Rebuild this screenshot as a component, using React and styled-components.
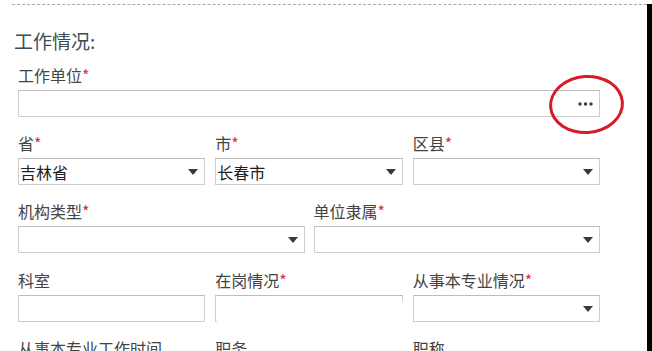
import React from 'react';
import styled, { createGlobalStyle } from 'styled-components';

const GlobalStyle = createGlobalStyle`
  html, body {
    margin: 0;
    padding: 0;
    background: #fff;
  }
  body {
    font-family: "Noto Sans CJK SC", "Liberation Sans", sans-serif;
    color: #333;
  }
`;

const Page = styled.div`
  display: flex;
  width: 652px;
  height: 351px;
  overflow: hidden;
  background: #fff;
`;

const Main = styled.div`
  flex: 1;
  padding-top: 4px;
`;

const EdgeBar = styled.div`
  width: 5px;
  margin-top: 4px;
  background: #000;
`;

const Section = styled.section`
  margin-left: 12px;
  border-top: 1px dashed #a8a8a8;
`;

const Heading = styled.h3`
  margin: 24px 0 0 2px;
  height: 24px;
  font-size: 19px;
  line-height: 24px;
  font-weight: 400;
  color: #3d4c57;
`;

const Form = styled.div`
  width: 582px;
  margin: 12px 0 0 6px;
  display: flex;
  flex-direction: column;
  gap: 16px;
`;

const Row = styled.div`
  display: grid;
  grid-template-columns: repeat(${p => p.$cols}, 1fr);
  column-gap: ${p => (p.$cols === 2 ? 9 : 10)}px;
  margin-top: ${p => p.$extra || 0}px;
`;

const Field = styled.div`
  position: relative;
  display: flex;
  flex-direction: column;
  gap: 5px;
  z-index: ${p => p.$raise ? 2 : 'auto'};
`;

const Label = styled.label`
  display: block;
  height: 20px;
  overflow: visible;
  font-size: 16px;
  line-height: 20px;
  color: #444;
  white-space: nowrap;
`;

const Star = styled.span`
  color: #dd2b3c;
`;

const Box = styled.div`
  position: relative;
  height: 27px;
  box-sizing: border-box;
  border: 1px solid #cdcdcd;
  border-top-color: #bdbdbd;
  background: #fff;
  display: flex;
  align-items: center;
  justify-content: space-between;
  padding: 0 6px 0 1px;
  font-size: 16px;
  color: #222;
`;

const Value = styled.span`
  line-height: 20px;
`;

const DotsButton = styled.span`
  display: flex;
  align-items: center;
`;

const Circle = styled.div`
  position: absolute;
  left: 530px;
  top: -16px;
  width: 75px;
  height: 59px;
  box-sizing: border-box;
  border: 3px solid #d71b29;
  border-radius: 50%;
  transform: rotate(-4deg);
  pointer-events: none;
`;

const BlankMenu = styled.div`
  position: absolute;
  left: 1px;
  top: 5px;
  width: 247px;
  height: 34px;
  background: #fff;
  z-index: 1;
`;

const Caret = () => (
  <svg width="10" height="6" viewBox="0 0 10 6">
    <path d="M0 0 L10 0 L5 6 Z" fill="#3a3a3a" />
  </svg>
);

const Dots = () => (
  <svg width="15" height="4" viewBox="0 0 15 4">
    <circle cx="2" cy="2" r="1.7" fill="#3c3c3c" />
    <circle cx="7.5" cy="2" r="1.7" fill="#3c3c3c" />
    <circle cx="13" cy="2" r="1.7" fill="#3c3c3c" />
  </svg>
);

const Select = ({ value }) => (
  <Box>
    <Value>{value}</Value>
    <Caret />
  </Box>
);

const LabelText = ({ text, required }) => (
  <Label>
    {text}
    {required && <Star>*</Star>}
  </Label>
);

export default function App() {
  return (
    <Page>
      <GlobalStyle />
      <Main>
        <Section>
          <Heading>工作情况:</Heading>
          <Form>
            <Row $cols={1}>
              <Field>
                <LabelText text="工作单位" required />
                <Box>
                  <Value />
                  <DotsButton><Dots /></DotsButton>
                  <Circle />
                </Box>
              </Field>
            </Row>
            <Row $cols={3}>
              <Field>
                <LabelText text="省" required />
                <Select value="吉林省" />
              </Field>
              <Field>
                <LabelText text="市" required />
                <Select value="长春市" />
              </Field>
              <Field>
                <LabelText text="区县" required />
                <Select />
              </Field>
            </Row>
            <Row $cols={2}>
              <Field>
                <LabelText text="机构类型" required />
                <Select />
              </Field>
              <Field>
                <LabelText text="单位隶属" required />
                <Select />
              </Field>
            </Row>
            <Row $cols={3} $extra={1}>
              <Field>
                <LabelText text="科室" />
                <Box />
              </Field>
              <Field>
                <LabelText text="在岗情况" required />
                <Box>
                  <BlankMenu />
                </Box>
              </Field>
              <Field $raise>
                <LabelText text="从事本专业情况" required />
                <Select />
              </Field>
            </Row>
            <Row $cols={3}>
              <Field>
                <LabelText text="从事本专业工作时间" />
              </Field>
              <Field>
                <LabelText text="职务" />
              </Field>
              <Field>
                <LabelText text="职称" />
              </Field>
            </Row>
          </Form>
        </Section>
      </Main>
      <EdgeBar />
    </Page>
  );
}
